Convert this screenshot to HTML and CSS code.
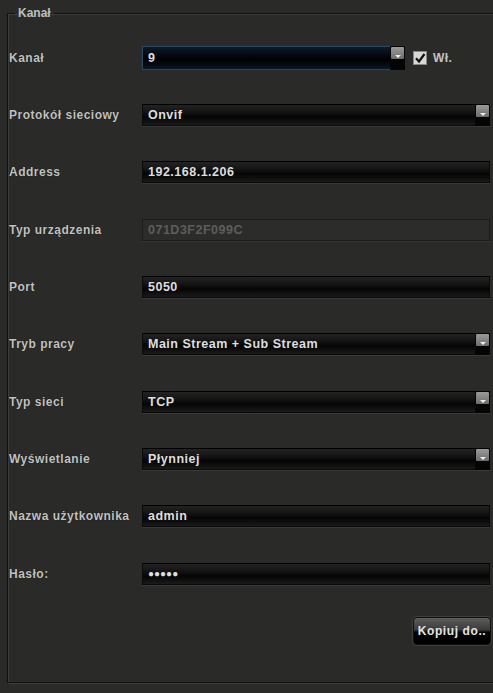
FILE: index.html
```html
<!DOCTYPE html>
<html lang="pl">
<head>
    <meta charset="UTF-8">
    <title>Kanał</title>
    <link rel="stylesheet" href="styles.css">
</head>
<body>

    <fieldset class="channel-box">
        <legend>Kanał</legend>

        <div class="rows">
            <div class="row">
                <label>Kanał</label>
                <div class="with-check">
                    <div class="field select focused"><span>9</span><i class="arrow"></i></div>
                    <span class="check">
                        <svg viewBox="0 0 14 14" width="14" height="14"><rect x="0.5" y="0.5" width="13" height="13" fill="#d8d8d8" stroke="#888"/><path d="M3 7.2 L6 10.5 L11.5 3" fill="none" stroke="#111" stroke-width="2.2"/></svg>
                    </span>
                    <span class="check-label">Wł.</span>
                </div>
            </div>

            <div class="row">
                <label>Protokół sieciowy</label>
                <div class="field select"><span>Onvif</span><i class="arrow"></i></div>
            </div>

            <div class="row">
                <label>Address</label>
                <div class="field"><span>192.168.1.206</span></div>
            </div>

            <div class="row">
                <label>Typ urządzenia</label>
                <div class="field disabled"><span>071D3F2F099C</span></div>
            </div>

            <div class="row">
                <label>Port</label>
                <div class="field"><span>5050</span></div>
            </div>

            <div class="row">
                <label>Tryb pracy</label>
                <div class="field select"><span>Main Stream + Sub Stream</span><i class="arrow"></i></div>
            </div>

            <div class="row">
                <label>Typ sieci</label>
                <div class="field select"><span>TCP</span><i class="arrow"></i></div>
            </div>

            <div class="row">
                <label>Wyświetlanie</label>
                <div class="field select"><span>Płynniej</span><i class="arrow"></i></div>
            </div>

            <div class="row">
                <label>Nazwa użytkownika</label>
                <div class="field"><span>admin</span></div>
            </div>

            <div class="row">
                <label>Hasło:</label>
                <div class="field"><span class="dots">●●●●●</span></div>
            </div>
        </div>

        <div class="actions">
            <button class="copy-btn">Kopiuj do..</button>
        </div>
    </fieldset>

</body>
</html>
```

FILE: styles.css
```css
body {
    margin: 0;
    background-color: #2a2b29;
    font-family: "Liberation Sans", Arial, sans-serif;
    font-size: 12px;
    font-weight: bold;
    color: #c2c3c1;
    height: 693px;
    overflow: hidden;
}

.channel-box {
    margin: 7px -20px 0 7px;
    padding: 0 0 0 1px;
    height: 676px;
    border: 1px solid #121212;
    box-shadow: inset 1px 1px 0 #3c3d3b, 1px 1px 0 #3c3d3b;
    box-sizing: border-box;
}

.channel-box legend {
    padding: 0 3px;
    margin-left: 6px;
    color: #bdbebc;
    line-height: 12px;
}

.rows {
    padding-top: 10px;
}

.row {
    display: flex;
    align-items: center;
    height: 57.33px;
}

.row label {
    width: 133px;
    flex-shrink: 0;
    letter-spacing: 0.5px;
    text-shadow: 0 0 1px #000;
}

.with-check {
    display: flex;
    align-items: center;
}

.field {
    position: relative;
    width: 348px;
    height: 22px;
    box-sizing: border-box;
    border: 1px solid #0a0a0a;
    border-top-color: #000;
    background: linear-gradient(#232323 0%, #141414 35%, #050505 60%, #1a1a1a 100%);
    box-shadow: 0 1px 0 #3a3b39;
    display: flex;
    align-items: center;
    padding-left: 5px;
    color: #dedede;
    font-size: 12.5px;
    letter-spacing: 0.5px;
}

.with-check .field {
    width: 263px;
    height: 24px;
}

.field.focused {
    border-color: #2c4660;
    background: linear-gradient(#0c1a28 0%, #04080e 40%, #000 60%, #0b1826 100%);
    box-shadow: 0 0 2px #1d3550;
}

.field.disabled {
    background: #2c2d2b;
    border-color: #1c1c1c;
    color: #5d5e5c;
    box-shadow: 0 1px 0 #333;
}

.field .arrow {
    position: absolute;
    right: -1px;
    top: -1px;
    bottom: -1px;
    width: 15px;
    background: #050505;
}

.field .arrow::before {
    content: "";
    position: absolute;
    left: 1px;
    right: 1px;
    top: 1px;
    height: 12px;
    background: linear-gradient(#9a9a9a, #6d6d6d);
    border-radius: 1px;
}

.field .arrow::after {
    content: "";
    position: absolute;
    left: 5px;
    top: 9px;
    border-left: 3px solid transparent;
    border-right: 3px solid transparent;
    border-top: 3px solid #eee;
}

.check {
    margin-left: 8px;
    display: flex;
}

.check-label {
    margin-left: 6px;
    letter-spacing: 0.4px;
}

.dots {
    font-size: 10px;
    letter-spacing: 0;
}

.actions {
    display: flex;
    justify-content: flex-end;
    padding: 15px 1px 0 0;
    margin-right: 20px;
}

.copy-btn {
    width: 78px;
    height: 28px;
    font-family: "Liberation Sans", Arial, sans-serif;
    font-size: 12px;
    font-weight: bold;
    letter-spacing: 0.6px;
    color: #e4e4e4;
    border: 1px solid #111;
    border-radius: 4px;
    background: linear-gradient(#5c5e5c 0%, #3a3b3a 45%, #050505 55%, #000 100%);
    box-shadow: 0 0 0 1px #3e3f3d;
    cursor: pointer;
    padding: 0;
}
```
